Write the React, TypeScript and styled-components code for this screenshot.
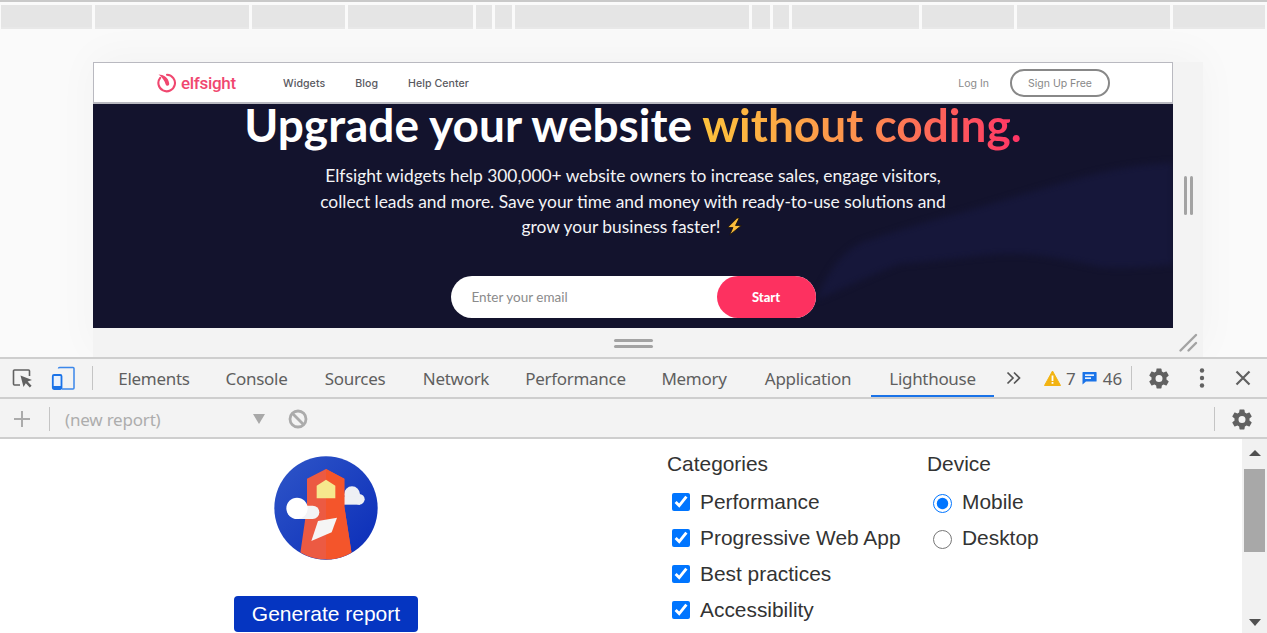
import React from "react";
import styled, { createGlobalStyle } from "styled-components";

const Global = createGlobalStyle`
  html, body { margin: 0; padding: 0; background: #fff; overflow: hidden; }
  * { box-sizing: border-box; }
`;

const Page = styled.div`
  width: 1267px;
  height: 633px;
  display: flex;
  flex-direction: column;
  overflow: hidden;
  font-family: "Liberation Sans", Arial, sans-serif;
`;

const Top = styled.section`
  height: 357px;
  background: #fafafa;
  display: flex;
  flex-direction: column;
`;

const RulerLine = styled.div`
  height: 2px;
  background: #c9c9c9;
  flex: none;
`;

const Ruler = styled.div`
  display: flex;
  gap: 3px;
  height: 22px;
  margin: 3px 0 0 1px;
  flex: none;
`;

const RulerSeg = styled.div<{ $w: number }>`
  width: ${(p) => p.$w}px;
  background: #e5e5e5;
  box-shadow: 0 2px 0 #e8e8e8;
`;

const Stage = styled.div`
  display: grid;
  grid-template-columns: 1080px 30px;
  grid-template-rows: 266px 29px;
  margin: 35px 0 0 93px;
  width: 1110px;
  box-shadow: 0 -6px 40px rgba(0, 0, 0, 0.035);
`;

const Frame = styled.div`
  display: flex;
  flex-direction: column;
  overflow: hidden;
  background: #13132d;
  position: relative;
`;

const Nav = styled.header`
  height: 42px;
  flex: none;
  background: #fff;
  border: 1px solid #b9b9c0;
  border-bottom-width: 2px;
  display: flex;
  align-items: center;
  padding: 1px 62px 0 63px;
  font-family: "Inter", "Liberation Sans", sans-serif;
  color: #555;
`;

const Logo = styled.div`
  display: flex;
  align-items: center;
  gap: 4px;
  width: 126px;
  color: #f0476f;
  font-size: 17px;
  font-weight: 500;
  font-family: "Roboto", sans-serif;
  letter-spacing: -0.3px;
`;

const NavLinks = styled.nav`
  display: flex;
  gap: 30px;
  font-size: 10.6px;
  font-weight: 500;
  letter-spacing: 0.05px;
  color: #5a5a5f;
  flex: 1;
`;

const LogIn = styled.span`
  font-size: 10.5px;
  font-weight: 400;
  color: #8a8a8a;
  margin-right: 21px;
`;

const SignUp = styled.span`
  width: 100px;
  height: 28px;
  border: 2px solid #888;
  border-radius: 14px;
  display: flex;
  align-items: center;
  justify-content: center;
  font-size: 10.5px;
  font-weight: 400;
  color: #888;
`;

const Hero = styled.div`
  flex: 1;
  position: relative;
  display: flex;
  flex-direction: column;
  align-items: center;
  color: #fff;
  font-family: "Lato", sans-serif;
`;

const HeroWave = styled.svg`
  position: absolute;
  inset: 0;
  width: 100%;
  height: 100%;
  filter: blur(3px);
`;

const Title = styled.h1`
  position: relative;
  margin: -5px 0 0;
  font-size: 46px;
  line-height: 52px;
  font-weight: 700;
  white-space: nowrap;
`;

const Gradient = styled.span`
  background: linear-gradient(90deg, #fdc23c 0%, #fd8f4e 50%, #ff3366 100%);
  -webkit-background-clip: text;
  background-clip: text;
  color: transparent;
`;

const Lead = styled.p`
  position: relative;
  margin: 12px 0 0;
  width: 640px;
  text-align: center;
  font-size: 17.4px;
  line-height: 25.5px;
  font-weight: 400;
  color: #f4f4f6;
`;

const Bolt = styled.svg`
  width: 19px;
  height: 19px;
  margin-left: 5px;
  vertical-align: -3px;
`;

const Form = styled.div`
  position: relative;
  margin-top: 36px;
  width: 365px;
  height: 42px;
  border-radius: 21px;
  background: #fff;
  display: flex;
  align-items: center;
  justify-content: space-between;
  padding-left: 21px;
  font-family: "Lato", sans-serif;
`;

const EmailHint = styled.span`
  color: #8b8b8b;
  font-size: 13.5px;
`;

const StartButton = styled.span`
  width: 99px;
  height: 42px;
  border-radius: 21px;
  background: #fd3160;
  color: #fff;
  font-size: 13px;
  font-weight: 900;
  display: flex;
  align-items: center;
  justify-content: center;
`;

const SideHandle = styled.div`
  background: #f3f3f3;
  display: flex;
  align-items: center;
  justify-content: center;
  gap: 3px;
`;

const BottomHandle = styled.div`
  background: #f3f3f3;
  display: flex;
  flex-direction: column;
  align-items: center;
  gap: 3px;
  padding-top: 11px;
`;

const VBar = styled.i`
  width: 3px;
  height: 39px;
  border-radius: 2px;
  background: #a3a3a3;
  display: block;
`;

const HBar = styled.i`
  width: 39px;
  height: 3px;
  border-radius: 2px;
  background: #a3a3a3;
  display: block;
`;

const Corner = styled.div`
  background: #f3f3f3;
  display: flex;
`;

const Bar = styled.div`
  flex: none;
  height: 40px;
  background: #f3f3f3;
  border-top: 2px solid #cecece;
  display: flex;
  align-items: stretch;
  font-family: "Noto Sans", sans-serif;
  color: #5a5a5a;
`;

const SubBar = styled(Bar)`
  padding-top: 2px;
`;

const IconSlot = styled.span<{ $left: number; $w: number }>`
  width: ${(p) => p.$w}px;
  margin-left: ${(p) => p.$left}px;
  display: flex;
  align-items: center;
  justify-content: center;
  flex: none;
`;

const Sep = styled.span<{ $left: number; $h?: number }>`
  width: 1px;
  height: ${(p) => p.$h ?? 24}px;
  background: #c4c4c4;
  margin-left: ${(p) => p.$left}px;
  align-self: center;
  flex: none;
`;

const Tabs = styled.div`
  display: flex;
  margin-left: 8px;
`;

const Tab = styled.div<{ $active?: boolean; $w: number }>`
  width: ${(p) => p.$w}px;
  display: flex;
  align-items: center;
  justify-content: center;
  font-size: 17px;
  color: #5f5f5f;
  letter-spacing: -0.3px;
  box-shadow: ${(p) => (p.$active ? "inset 0 -2px 0 #1a73e8" : "none")};
`;

const Count = styled.span<{ $left: number }>`
  margin-left: ${(p) => p.$left}px;
  align-self: center;
  font-size: 17px;
  color: #5f5f5f;
  flex: none;
`;

const NewReport = styled.span`
  margin-left: 15px;
  width: 187px;
  align-self: center;
  font-size: 17px;
  letter-spacing: -0.2px;
  color: #adadad;
  flex: none;
`;

const Content = styled.main`
  flex: 1;
  min-height: 0;
  border-top: 2px solid #cecece;
  display: flex;
  overflow: hidden;
  background: #fff;
`;

const LogoCol = styled.div`
  width: 652px;
  flex: none;
  display: flex;
  flex-direction: column;
  align-items: center;
  padding-top: 17px;
`;

const Generate = styled.button`
  margin-top: 36px;
  width: 184px;
  height: 36px;
  border: 0;
  border-radius: 4px;
  background: #0535c1;
  color: #fff;
  font: 21px "Liberation Sans", sans-serif;
  padding: 0;
`;

const Group = styled.div<{ $w: number; $left?: number }>`
  width: ${(p) => p.$w}px;
  margin-left: ${(p) => p.$left ?? 0}px;
  flex: none;
  color: #333;
  font-size: 20.9px;
`;

const GroupTitle = styled.div`
  height: 24px;
  line-height: 24px;
  margin-top: 13px;
  margin-bottom: 8px;
`;

const Option = styled.label`
  height: 36px;
  display: flex;
  align-items: center;
  white-space: nowrap;
`;

const Check = styled.input`
  width: 18px;
  height: 18px;
  margin: 0 10px 0 5px;
  flex: none;
`;

const Radio = styled.input`
  width: 19px;
  height: 19px;
  margin: 2px 10px 0 6px;
  flex: none;
`;

const Scroll = styled.div`
  margin-left: auto;
  width: 25px;
  flex: none;
  background: #f1f1f1;
  padding: 0 2px;
  display: flex;
  flex-direction: column;
  align-items: center;
`;

const Arrow = styled.svg<{ $top?: number; $bottom?: number }>`
  width: 12px;
  height: 8px;
  flex: none;
  margin-top: ${(p) => p.$top ?? 0}px;
  margin-bottom: ${(p) => p.$bottom ?? 0}px;
`;

const Thumb = styled.div`
  width: 21px;
  height: 83px;
  background: #a8a8a8;
  margin-top: 12px;
`;

const ScrollSpacer = styled.div`
  flex: 1;
`;

const Gear = ({ size = 22 }: { size?: number }) => (
  <svg width={size} height={size} viewBox="0 0 24 24" fill="#616161">
    <path d="M19.43 12.98c.04-.32.07-.64.07-.98s-.03-.66-.07-.98l2.11-1.65c.19-.15.24-.42.12-.64l-2-3.46c-.12-.22-.39-.3-.61-.22l-2.49 1c-.52-.4-1.08-.73-1.69-.98l-.38-2.65A.49.49 0 0 0 14 2h-4c-.25 0-.46.18-.49.42l-.38 2.65c-.61.25-1.17.59-1.69.98l-2.49-1c-.23-.09-.49 0-.61.22l-2 3.46c-.13.22-.07.49.12.64l2.11 1.65c-.04.32-.07.65-.07.98s.03.66.07.98l-2.11 1.65c-.19.15-.24.42-.12.64l2 3.46c.12.22.39.3.61.22l2.49-1c.52.4 1.08.73 1.69.98l.38 2.65c.03.24.24.42.49.42h4c.25 0 .46-.18.49-.42l.38-2.65c.61-.25 1.17-.59 1.69-.98l2.49 1c.23.09.49 0 .61-.22l2-3.46c.12-.22.07-.49-.12-.64l-2.11-1.65zM12 15.5a3.5 3.5 0 1 1 0-7 3.5 3.5 0 0 1 0 7z" />
  </svg>
);

const segments = [91, 154, 93, 125, 16, 17, 234, 18, 16, 127, 92, 153, 92];
const tabs: [string, number][] = [
  ["Elements", 106],
  ["Console", 99],
  ["Sources", 98],
  ["Network", 104],
  ["Performance", 135],
  ["Memory", 102],
  ["Application", 126],
  ["Lighthouse", 123],
];

export default function App() {
  return (
    <Page>
      <Global />
      <Top>
        <RulerLine />
        <Ruler>
          {segments.map((w, i) => (
            <RulerSeg key={i} $w={w} />
          ))}
        </Ruler>
        <Stage>
          <Frame>
            <Nav>
              <Logo>
                <svg width="20" height="20" viewBox="0 0 20 20" fill="none">
                  <path d="M3.2 4.8A8.3 8.3 0 1 0 10 1.7" stroke="#f0476f" strokeWidth="2.1" strokeLinecap="round" />
                  <path d="M1.5 1.5C6.5 1.5 11.5 4.5 12.2 10.5 12.5 13 9.5 13.5 8.7 11.5 7.5 7.5 5 4 1.5 1.5Z" fill="#f0476f" />
                </svg>
                <span>elfsight</span>
              </Logo>
              <NavLinks>
                <span>Widgets</span>
                <span>Blog</span>
                <span>Help Center</span>
              </NavLinks>
              <LogIn>Log In</LogIn>
              <SignUp>Sign Up Free</SignUp>
            </Nav>
            <Hero>
              <HeroWave viewBox="0 0 1080 224" preserveAspectRatio="none">
                <path
                  d="M723 196C735 170 745 150 770 138 810 125 840 116 874 107 915 95 950 84 990 73 1025 64 1050 60 1090 58V160C1055 163 1030 165 1007 163 970 155 940 148 907 150 870 153 835 158 807 160 785 168 760 180 723 196Z"
                  fill="#16173a"
                />
              </HeroWave>
              <Title>
                Upgrade your website <Gradient>without coding.</Gradient>
              </Title>
              <Lead>
                Elfsight widgets help 300,000+ website owners to increase sales, engage visitors, collect leads and more. Save your time and money with ready-to-use solutions and grow your business faster!
                <Bolt viewBox="0 0 17 18">
                  <path d="M11 1 2 10h5l-3 7 11-9H9.5L13 1Z" fill="#fbbc3b" stroke="#1a1208" strokeWidth="0.8" />
                </Bolt>
              </Lead>
              <Form>
                <EmailHint>Enter your email</EmailHint>
                <StartButton>Start</StartButton>
              </Form>
            </Hero>
          </Frame>
          <SideHandle>
            <VBar />
            <VBar />
          </SideHandle>
          <BottomHandle>
            <HBar />
            <HBar />
          </BottomHandle>
          <Corner>
            <svg width="30" height="29" viewBox="0 0 30 29" fill="none" stroke="#a3a3a3" strokeWidth="2.4" strokeLinecap="round">
              <path d="M7.5 22.5 23 7" />
              <path d="M15.5 22.5 23 15" />
            </svg>
          </Corner>
        </Stage>
      </Top>

      <Bar>
        <IconSlot $left={12} $w={23}>
          <svg width="23" height="23" viewBox="0 0 23 23" fill="none">
            <path d="M8 18H2.5a1 1 0 0 1-1-1V4a1 1 0 0 1 1-1h14a1 1 0 0 1 1 1v5" stroke="#616161" strokeWidth="1.6" />
            <path d="M8.5 8.5 20 13l-4.4 1.5 4 4.3-1.8 1.7-4-4.3L11.5 20Z" fill="#616161" />
          </svg>
        </IconSlot>
        <IconSlot $left={16} $w={24}>
          <svg width="24" height="24" viewBox="0 0 24 24" fill="none">
            <path d="M7.5 2.5a1 1 0 0 1 1-1H22a1 1 0 0 1 1 1V22a1 1 0 0 1-1 1H11" stroke="#1a73e8" strokeWidth="1.5" opacity=".85" />
            <rect x="1.8" y="9" width="8.7" height="14" rx="1.2" stroke="#1a73e8" strokeWidth="1.8" fill="#eaf2fd" />
            <rect x="1.8" y="20" width="8.7" height="3" fill="#1a73e8" />
          </svg>
        </IconSlot>
        <Sep $left={17} />
        <Tabs>
          {tabs.map(([t, w]) => (
            <Tab key={t} $w={w} $active={t === "Lighthouse"}>
              {t}
            </Tab>
          ))}
        </Tabs>
        <IconSlot $left={11} $w={18}>
          <svg width="16" height="14" viewBox="0 0 16 14" fill="none" stroke="#555" strokeWidth="1.7">
            <path d="M1.5 1.5 7 7l-5.5 5.5" />
            <path d="M8 1.5 13.5 7 8 12.5" />
          </svg>
        </IconSlot>
        <IconSlot $left={21} $w={17}>
          <svg width="17" height="16" viewBox="0 0 17 16">
            <path d="M8.5 1 16.5 15.5H.5Z" fill="#f2b312" stroke="#f2b312" strokeLinejoin="round" />
            <rect x="7.6" y="5.5" width="1.8" height="5.5" fill="#fff" />
            <rect x="7.6" y="12" width="1.8" height="1.8" fill="#fff" />
          </svg>
        </IconSlot>
        <Count $left={5}>7</Count>
        <IconSlot $left={6} $w={15}>
          <svg width="15" height="14" viewBox="0 0 15 14">
            <path d="M1 1h13a.6.6 0 0 1 .6.6V10a.6.6 0 0 1-.6.6H4L.5 13.5V1.6A.6.6 0 0 1 1 1Z" fill="#1a73e8" />
            <rect x="3" y="3.4" width="9" height="1.5" fill="#fff" />
            <rect x="3" y="6.4" width="6" height="1.5" fill="#fff" />
          </svg>
        </IconSlot>
        <Count $left={6}>46</Count>
        <Sep $left={9} />
        <IconSlot $left={15} $w={24}>
          <Gear size={25} />
        </IconSlot>
        <IconSlot $left={19} $w={24}>
          <svg width="6" height="20" viewBox="0 0 6 20" fill="#616161">
            <circle cx="3" cy="2.5" r="2.2" />
            <circle cx="3" cy="10" r="2.2" />
            <circle cx="3" cy="17.5" r="2.2" />
          </svg>
        </IconSlot>
        <IconSlot $left={17} $w={24}>
          <svg width="16" height="16" viewBox="0 0 16 16" stroke="#616161" strokeWidth="2.2">
            <path d="M1.5 1.5 14.5 14.5M14.5 1.5 1.5 14.5" />
          </svg>
        </IconSlot>
      </Bar>

      <SubBar>
        <IconSlot $left={13} $w={18}>
          <svg width="16" height="16" viewBox="0 0 16 16" stroke="#ababab" strokeWidth="2">
            <path d="M8 0v16M0 8h16" />
          </svg>
        </IconSlot>
        <Sep $left={18} />
        <NewReport>(new report)</NewReport>
        <IconSlot $left={0} $w={14}>
          <svg width="12" height="10" viewBox="0 0 12 10" fill="#a8a8a8">
            <path d="M0 0h12L6 10Z" />
          </svg>
        </IconSlot>
        <IconSlot $left={21} $w={21}>
          <svg width="20" height="20" viewBox="0 0 20 20" fill="none" stroke="#ababab" strokeWidth="2.8">
            <circle cx="10" cy="10" r="8" />
            <path d="M4.5 4.5 15.5 15.5" />
          </svg>
        </IconSlot>
        <Sep $left={906} />
        <IconSlot $left={15} $w={24}>
          <Gear size={25} />
        </IconSlot>
      </SubBar>

      <Content>
        <LogoCol>
          <svg width="104" height="104" viewBox="45 33 310 312">
            <defs>
              <clipPath id="disc">
                <circle cx="200" cy="189" r="154" />
              </clipPath>
              <linearGradient id="sky" x1="0" y1="0" x2="1" y2="1">
                <stop offset="0" stopColor="#2f56c8" />
                <stop offset="1" stopColor="#0a2cb8" />
              </linearGradient>
            </defs>
            <circle cx="200" cy="189" r="155" fill="url(#sky)" />
            <g clipPath="url(#disc)">
              <circle cx="278" cy="148" r="24" fill="#eef0f4" />
              <circle cx="300" cy="163" r="16" fill="#eef0f4" />
              <rect x="250" y="155" width="52" height="24" fill="#eef0f4" />
              <path d="M200 72 255 101V185L280 345H120L143 185V101Z" fill="#ec5a42" />
              <path d="M200 72 255 101V185L280 345H200Z" fill="#f4552b" />
              <path d="M172 160V122L200 104 228 122V160Z" fill="#f6e88d" />
              <path d="M176 228 233 218 217 262 156 288Z" fill="#f5f5f5" />
              <rect x="104" y="182" width="76" height="40" rx="20" fill="#f3f3f5" />
              <circle cx="113" cy="190" r="32" fill="#fff" />
            </g>
          </svg>
          <Generate type="button">Generate report</Generate>
        </LogoCol>
        <Group $w={260} $left={15}>
          <GroupTitle>Categories</GroupTitle>
          {["Performance", "Progressive Web App", "Best practices", "Accessibility"].map((t) => (
            <Option key={t}>
              <Check type="checkbox" defaultChecked />
              {t}
            </Option>
          ))}
        </Group>
        <Group $w={200}>
          <GroupTitle>Device</GroupTitle>
          <Option>
            <Radio type="radio" name="device" defaultChecked />
            Mobile
          </Option>
          <Option>
            <Radio type="radio" name="device" />
            Desktop
          </Option>
        </Group>
        <Scroll>
          <Arrow viewBox="0 0 12 8" $top={10}>
            <path d="M6 1 12 7H0Z" fill="#505050" />
          </Arrow>
          <Thumb />
          <ScrollSpacer />
          <Arrow viewBox="0 0 12 8" $bottom={6}>
            <path d="M0 0H12L6 7Z" fill="#505050" />
          </Arrow>
        </Scroll>
      </Content>
    </Page>
  );
}
